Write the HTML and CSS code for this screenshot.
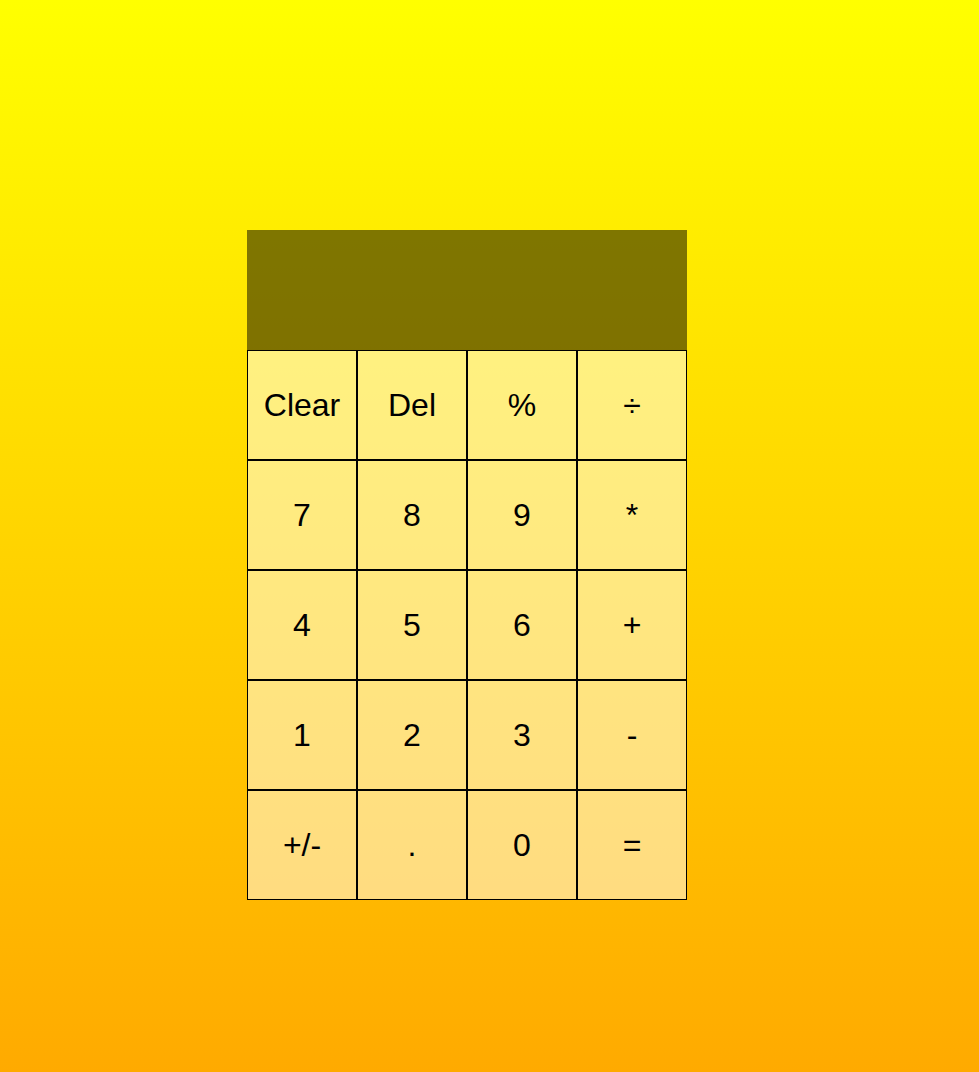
FILE: index.html
```html
<!DOCTYPE html>
<html>
<head>
<meta charset="utf-8">
<link rel="stylesheet" href="styles.css">
</head>
<body>
<div class="page">
  <div class="calc">
    <div class="display"></div>
    <div class="keys">
      <button class="key">Clear</button>
      <button class="key">Del</button>
      <button class="key">%</button>
      <button class="key">÷</button>
      <button class="key">7</button>
      <button class="key">8</button>
      <button class="key">9</button>
      <button class="key">*</button>
      <button class="key">4</button>
      <button class="key">5</button>
      <button class="key">6</button>
      <button class="key">+</button>
      <button class="key">1</button>
      <button class="key">2</button>
      <button class="key">3</button>
      <button class="key">-</button>
      <button class="key">+/-</button>
      <button class="key">.</button>
      <button class="key">0</button>
      <button class="key">=</button>
    </div>
  </div>
</div>
</body>
</html>
```
FILE: styles.css
```css
html, body {
  margin: 0;
  padding: 0;
  height: 100%;
}
body {
  background: linear-gradient(to bottom, #ffff00, #ffaa00);
  font-family: "Liberation Sans", Arial, sans-serif;
}
.page {
  display: flex;
  padding: 230px 0 0 247px;
}
.calc {
  width: 440px;
  display: flex;
  flex-direction: column;
}
.display {
  height: 120px;
  background: rgba(0, 0, 0, 0.5);
}
.keys {
  display: grid;
  grid-template-columns: repeat(4, 110px);
  grid-auto-rows: 110px;
}
.key {
  box-sizing: border-box;
  margin: 0;
  padding: 0;
  border: 1px solid #000;
  background: rgba(255, 255, 255, 0.5);
  font-family: "Liberation Sans", Arial, sans-serif;
  font-size: 32px;
  color: #000;
}
```
